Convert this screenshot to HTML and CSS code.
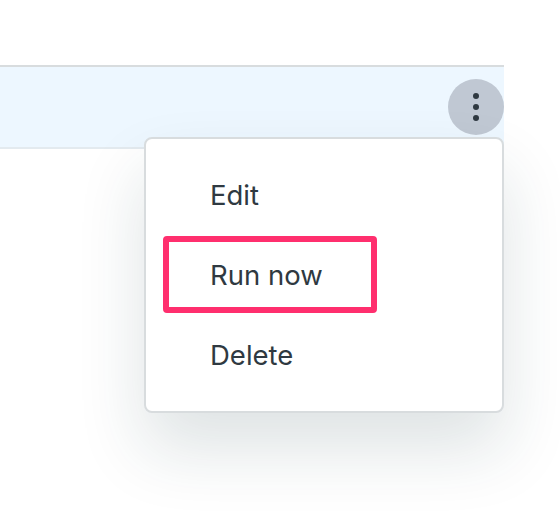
FILE: index.html
```html
<!DOCTYPE html>
<html lang="en">
<head>
    <meta charset="UTF-8">
    <meta name="viewport" content="width=device-width, initial-scale=1.0">
    <title>Row actions</title>
    <link rel="stylesheet" href="styles.css">
</head>
<body>
    <div class="table">
        <div class="table-row">
            <button class="menu-button" aria-label="Actions">
                <svg width="56" height="56" viewBox="0 0 56 56" fill="#2f3941">
                    <circle cx="28" cy="17" r="3"/>
                    <circle cx="28" cy="28" r="3"/>
                    <circle cx="28" cy="39" r="3"/>
                </svg>
            </button>
            <ul class="menu">
                <li class="menu-item">Edit</li>
                <li class="menu-item highlighted">Run now</li>
                <li class="menu-item">Delete</li>
            </ul>
        </div>
    </div>
</body>
</html>
```

FILE: styles.css
```css
* {
    box-sizing: border-box;
}
body {
    margin: 0;
    height: 514px;
    overflow: hidden;
    background-color: #fff;
    font-family: Inter, "Liberation Sans", sans-serif;
    color: #2f3941;
}
.table {
    width: 504px;
    padding-top: 65px;
}
.table-row {
    position: relative;
    display: flex;
    justify-content: flex-end;
    height: 84px;
    padding-top: 12px;
    background-color: #edf7ff;
    border-top: 2px solid #d8dcde;
    border-bottom: 2px solid #e3eaef;
}
.menu-button {
    width: 56px;
    height: 56px;
    padding: 0;
    border: none;
    border-radius: 50%;
    background-color: #c0c8d3;
    cursor: pointer;
}
.menu-button svg {
    display: block;
}
.menu {
    position: absolute;
    top: 70px;
    right: 0;
    width: 360px;
    height: 276px;
    margin: 0;
    padding: 16px 0;
    list-style: none;
    background-color: #fff;
    border: 2px solid #d8dcde;
    border-radius: 8px;
    box-shadow: 0 36px 68px rgba(23, 60, 67, 0.14);
}
.menu-item {
    position: relative;
    height: 80px;
    padding-left: 64px;
    font-size: 27.5px;
    line-height: 80px;
}
/* pink frame around the action to click */
.highlighted::before {
    content: "";
    position: absolute;
    box-sizing: border-box;
    top: 1px;
    left: 17px;
    width: 214px;
    height: 77px;
    border: 6px solid #ff2f6e;
    border-radius: 4px;
}
```
